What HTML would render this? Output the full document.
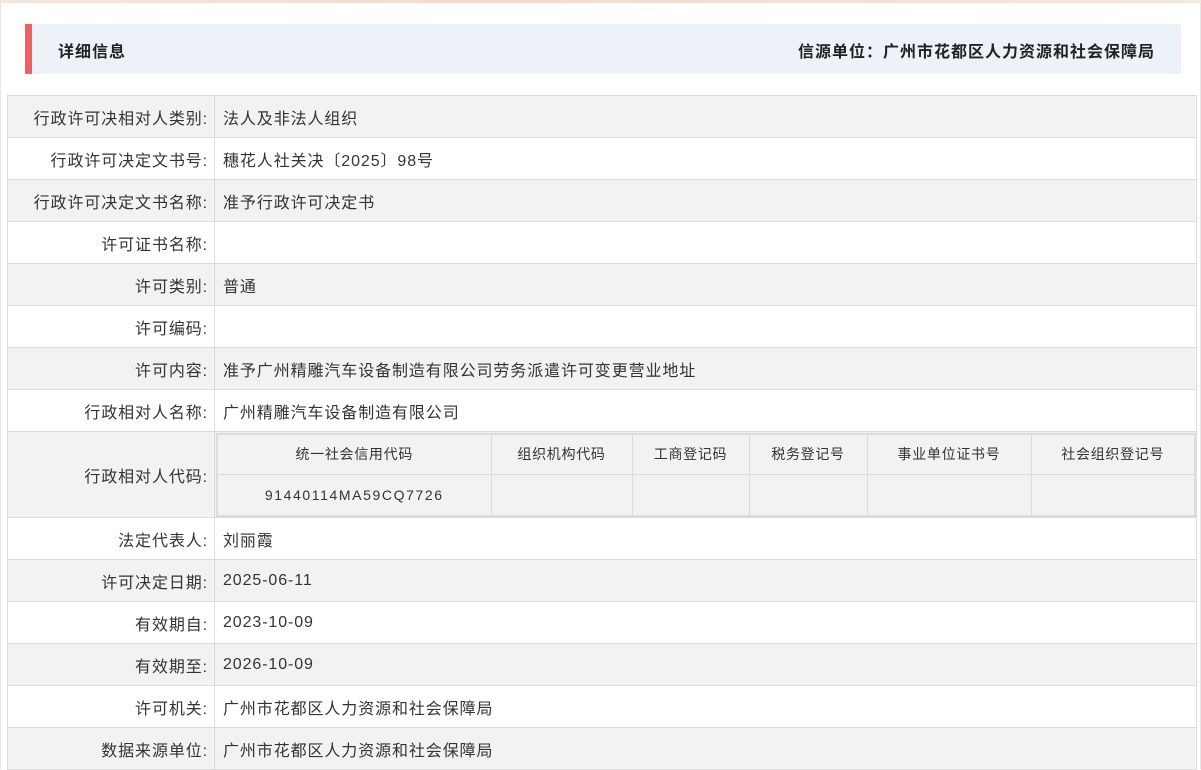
<!DOCTYPE html>
<html><head><meta charset="utf-8"><style>
*{margin:0;padding:0;box-sizing:border-box}
body{width:1201px;height:769px;overflow:hidden;background:#fff;font-family:"Liberation Sans","Noto Sans CJK SC",sans-serif;color:#333;font-size:16px;letter-spacing:0.9px;position:relative}
.top{position:absolute;left:0;top:0;width:1201px;height:3px;background:linear-gradient(90deg,#f3e7e2,#f7d9cc 40%,#f3e7e2)}
.frame{position:absolute;left:0;top:3px;width:1201px;height:766px;border-left:1px solid #e6e6e6;border-right:1px solid #e6e6e6}
.hd{position:absolute;left:25px;top:24px;width:1156px;height:50px;background:#edf2f9;border-left:7px solid #f65d5d;font-weight:bold;font-size:16px;letter-spacing:1px;color:#222}
.hd .l{position:absolute;left:26px;top:14px}
.hd .r{position:absolute;right:26px;top:14px}
table.m{position:absolute;left:7px;top:95px;width:1190px;border-collapse:collapse}
table.m td{border:1px solid #dcdcdc;height:42px;padding:0 8px;vertical-align:middle}
table.m td.k{width:207px;text-align:right;padding-right:6px}
tr.g td{background:#f2f2f2}
table.s{width:100%;border-collapse:collapse;border:2px solid #dcdcdc}
table.s td{border:1px solid #dcdcdc;height:41px;text-align:center;background:#f2f2f2;font-size:14px;letter-spacing:0.7px;padding:0}
table.s td.code{letter-spacing:1.6px}
td.in{padding:0 0 0 1px!important}
</style></head><body>
<div class="top"></div><div class="frame"></div>
<div class="hd"><span class="l">详细信息</span><span class="r">信源单位：广州市花都区人力资源和社会保障局</span></div>
<table class="m">
<tr class="g"><td class="k">行政许可决相对人类别:</td><td>法人及非法人组织</td></tr>
<tr><td class="k">行政许可决定文书号:</td><td>穗花人社关决〔2025〕98号</td></tr>
<tr class="g"><td class="k">行政许可决定文书名称:</td><td>准予行政许可决定书</td></tr>
<tr><td class="k">许可证书名称:</td><td></td></tr>
<tr class="g"><td class="k">许可类别:</td><td>普通</td></tr>
<tr><td class="k">许可编码:</td><td></td></tr>
<tr class="g"><td class="k">许可内容:</td><td>准予广州精雕汽车设备制造有限公司劳务派遣许可变更营业地址</td></tr>
<tr><td class="k">行政相对人名称:</td><td>广州精雕汽车设备制造有限公司</td></tr>
<tr class="g"><td class="k" style="height:86px">行政相对人代码:</td><td class="in">
<table class="s"><tr><td style="width:274px">统一社会信用代码</td><td style="width:141px">组织机构代码</td><td style="width:117px">工商登记码</td><td style="width:118px">税务登记号</td><td style="width:164px">事业单位证书号</td><td>社会组织登记号</td></tr>
<tr><td class="code">91440114MA59CQ7726</td><td></td><td></td><td></td><td></td><td></td></tr></table></td></tr>
<tr><td class="k">法定代表人:</td><td>刘丽霞</td></tr>
<tr class="g"><td class="k">许可决定日期:</td><td>2025-06-11</td></tr>
<tr><td class="k">有效期自:</td><td>2023-10-09</td></tr>
<tr class="g"><td class="k">有效期至:</td><td>2026-10-09</td></tr>
<tr><td class="k">许可机关:</td><td>广州市花都区人力资源和社会保障局</td></tr>
<tr class="g"><td class="k">数据来源单位:</td><td>广州市花都区人力资源和社会保障局</td></tr>
</table>
</body></html>
